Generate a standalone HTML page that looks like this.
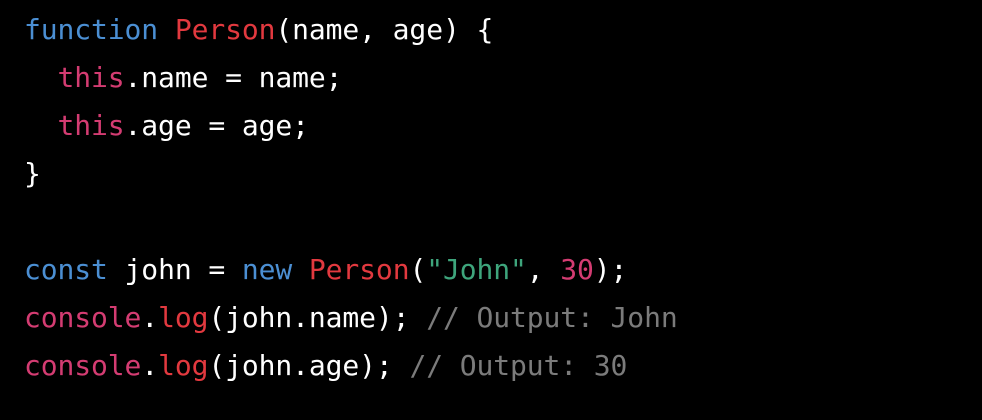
<!DOCTYPE html>
<html><head><meta charset="utf-8"><style>
html,body{margin:0;padding:0;background:#000;width:982px;height:420px;overflow:hidden}
pre{margin:0;position:absolute;left:24px;top:6px;font-family:"DejaVu Sans Mono","Liberation Mono",monospace;font-size:28px;line-height:48px;color:#fff;letter-spacing:-0.1px}
.b{color:#4b8fd3}.r{color:#e2393f}.p{color:#d43c72}.g{color:#3ea57c}.c{color:#7b7b7b}
</style></head><body>
<pre><span class="b">function</span> <span class="r">Person</span>(name, age) {
  <span class="p">this</span>.name = name;
  <span class="p">this</span>.age = age;
}

<span class="b">const</span> john = <span class="b">new</span> <span class="r">Person</span>(<span class="g">"John"</span>, <span class="p">30</span>);
<span class="p">console</span>.<span class="r">log</span>(john.name); <span class="c">// Output: John</span>
<span class="p">console</span>.<span class="r">log</span>(john.age); <span class="c">// Output: 30</span></pre>
</body></html>
